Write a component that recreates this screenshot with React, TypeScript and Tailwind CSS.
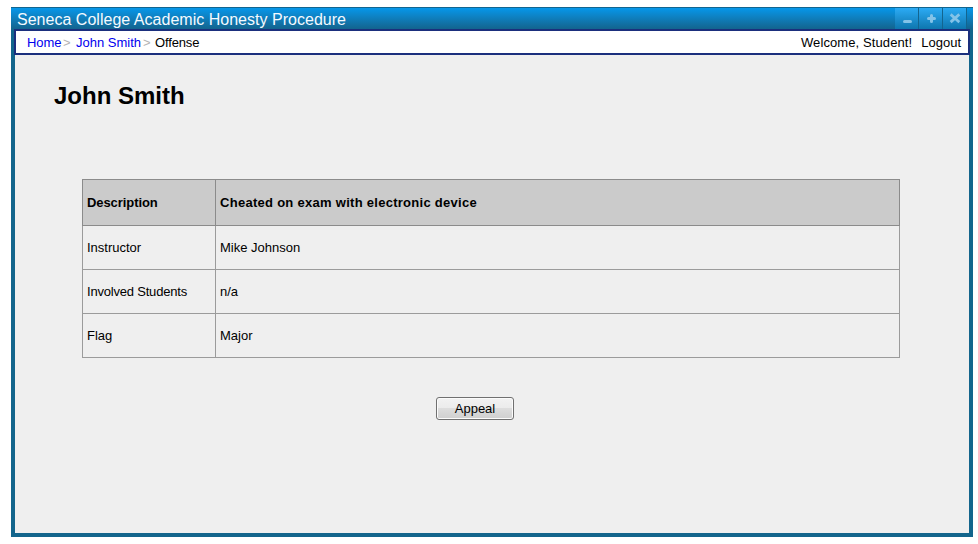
import React from "react";

const rows: { name: string; value: string; tracking: string }[] = [
  { name: "Instructor", value: "Mike Johnson", tracking: "" },
  { name: "Involved Students", value: "n/a", tracking: "tracking-[-0.2px]" },
  { name: "Flag", value: "Major", tracking: "" },
];

function Control({ label, children }: { label: string; children: React.ReactNode }) {
  return (
    <button
      aria-label={label}
      className="flex h-[21px] w-6 items-center justify-center border-r border-[#13658f] bg-linear-to-b from-[#2babf5] to-[#0e76ae]"
    >
      <svg width="23" height="21" viewBox="0 0 23 21" fill="none" stroke="#83c3e8">
        {children}
      </svg>
    </button>
  );
}

function TitleBar() {
  return (
    <header className="flex h-[22px] items-start border-t border-[#12658f] bg-linear-to-b from-[#0597ea] to-[#12648e] pr-[6px] pl-[6px]">
      <h1 className="flex-1 pt-px text-[16px] leading-[21px] tracking-[0.02px] whitespace-nowrap text-[#f4faff]">
        Seneca College Academic Honesty Procedure
      </h1>
      <Control label="Minimize">
        <path d="M9.5 13.5h6" strokeWidth="3" strokeLinecap="round" />
      </Control>
      <Control label="Maximize">
        <path d="M9.5 10.5h6M12.5 7.5v6" strokeWidth="3" strokeLinecap="round" />
      </Control>
      <Control label="Close">
        <path d="M8.7 7.3l6.6 5.9M15.3 7.3l-6.6 5.9" strokeWidth="2.8" strokeLinecap="square" />
      </Control>
    </header>
  );
}

function NavBar() {
  return (
    <nav className="mr-[3px] ml-[3px] flex h-[26px] items-start justify-between border-2 border-[#1b2f7d] bg-white pt-px pr-[7px] pl-[11px] text-[13px] leading-[22px] whitespace-nowrap">
      <div className="flex">
        <a className="w-[34px] tracking-[-0.1px] text-[#0000ee]">Home</a>
        <span className="w-[15px] pl-[2px] text-[#b4b4b4]">&gt;</span>
        <a className="w-[65px] text-[#0000ee]">John Smith</a>
        <span className="w-[14px] pl-[2px] text-[#b4b4b4]">&gt;</span>
        <span className="tracking-[-0.15px]">Offense</span>
      </div>
      <div className="flex gap-[9px]">
        <span className="tracking-[0.1px]">Welcome, Student!</span>
        <a>Logout</a>
      </div>
    </nav>
  );
}

export default function App() {
  return (
    <div className="h-[544px] w-[978px] bg-white pt-[7px] pl-[11px] font-['Liberation_Sans',Arial,sans-serif] text-black">
      <main className="flex h-[530px] w-[962px] flex-col bg-[#13658c]">
        <TitleBar />
        <NavBar />
        <section className="mr-1 mb-1 ml-1 flex-1 bg-[#efefef] pt-[27px]">
          <h2 className="ml-[39px] text-[24px] leading-7 font-bold whitespace-nowrap">John Smith</h2>
          <table className="mt-[69px] ml-[67px] w-[818px] table-fixed border-collapse border border-[#9b9b9b] text-left text-[13px] leading-4">
            <colgroup>
              <col className="w-[133px]" />
              <col />
            </colgroup>
            <thead>
              <tr className="h-[46px] bg-[#cbcbcb]">
                <th className="border border-[#8b8b8b] px-1 py-0 tracking-[-0.08px]">Description</th>
                <th className="border border-[#8b8b8b] px-1 py-0 tracking-[0.28px]">
                  Cheated on exam with electronic device
                </th>
              </tr>
            </thead>
            <tbody>
              {rows.map(({ name, value, tracking }) => (
                <tr key={name} className="h-[44px]">
                  <td className={`border border-[#9b9b9b] px-1 py-0 ${tracking}`}>{name}</td>
                  <td className="border border-[#9b9b9b] px-1 py-0">{value}</td>
                </tr>
              ))}
            </tbody>
          </table>
          <button className="mt-[39px] ml-[421px] flex h-[23px] w-[78px] items-center justify-center rounded-[3px] border border-[#707070] bg-[linear-gradient(#f2f2f2_0%,#ebebeb_49%,#dddddd_50%,#cfcfcf_100%)] text-[13px] leading-[21px] shadow-[inset_0_0_0_1px_#fbfbfb]">
            Appeal
          </button>
        </section>
      </main>
    </div>
  );
}
